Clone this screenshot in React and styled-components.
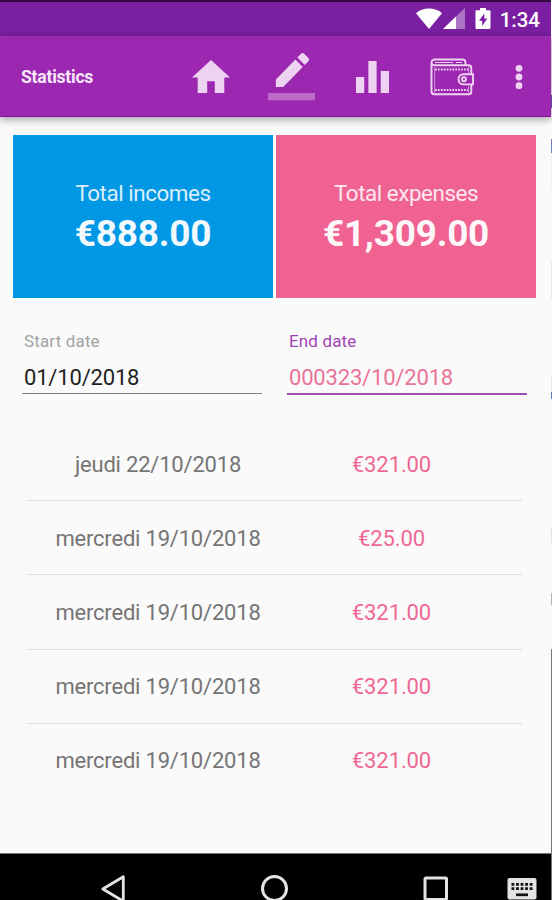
import React from 'react'
import styled, { createGlobalStyle } from 'styled-components'

const GlobalStyle = createGlobalStyle`
  * {
    box-sizing: border-box;
  }

  body {
    margin: 0;
    background: #fafafa;
    font-family: Roboto, 'Noto Sans', sans-serif;
  }
`

const Page = styled.div`
  display: flex;
  width: 552px;
  height: 900px;
  overflow: hidden;
`

const Screen = styled.div`
  display: flex;
  flex-direction: column;
  width: 551px;
  background: #fafafa;
`

// narrow column of whatever sits behind the device
const Backdrop = styled.div`
  width: 1px;
  background: linear-gradient(
    #fafafa 95px,
    #6a63b8 95px 108px,
    #fafafa 108px 139px,
    #7482bd 139px 153px,
    #edf0f5 153px 188px,
    #fafafa 188px 260px,
    #e9ebee 260px 300px,
    #fafafa 300px 374px,
    #e9ebee 374px 392px,
    #6576a8 392px 399px,
    #fafafa 399px 528px,
    #e2e2e4 528px 543px,
    #fafafa 543px 593px,
    #b5b5b9 593px 605px,
    #fafafa 605px 649px,
    #77777a 649px
  );
`

const StatusBar = styled.div`
  display: flex;
  align-items: flex-start;
  justify-content: flex-end;
  height: 36px;
  padding: 6px 11px 0 0;
  border-top: 2px solid #34083f;
  background: #7b1fa2;
  color: #fff;

  svg {
    display: block;
  }
`

const Clock = styled.span`
  margin-left: 9px;
  font-size: 20.5px;
  font-weight: 500;
  line-height: 24px;
`

const Toolbar = styled.header`
  display: flex;
  align-items: center;
  height: 81px;
  padding: 1px 28px 0 21px;
  border-bottom: 1px solid #8a109f;
  background: #9c27b0;
  box-shadow: 0 2px 8px rgba(0, 0, 0, 0.4);
  color: #edd3f1;
  z-index: 1;
`

const Title = styled.h1`
  flex: 1;
  margin: 0;
  padding-top: 1px;
  font-size: 17.6px;
  font-weight: 700;
  letter-spacing: -0.25px;
  line-height: 24px;
  color: #f7e7f9;
`

const Actions = styled.nav`
  display: flex;
  align-items: center;

  svg {
    display: block;
  }
`

const Totals = styled.section`
  display: grid;
  grid-template-columns: 260px 260px;
  gap: 3px;
  padding: 18px 0 0 13px;
`

const Card = styled.div`
  display: flex;
  flex-direction: column;
  align-items: center;
  height: 163px;
  padding-top: 44px;
  background: ${props => props.color};
  color: #fff;
`

const CardLabel = styled.span`
  font-size: 22.4px;
  line-height: 28px;
  letter-spacing: -0.45px;
  opacity: 0.85;
`

const CardAmount = styled.strong`
  margin-top: 3px;
  font-size: 37px;
  line-height: 48px;
  letter-spacing: -0.25px;
  opacity: 0.95;
`

const Dates = styled.section`
  display: grid;
  grid-template-columns: 240px 240px;
  gap: 25px;
  padding: 33px 0 0 22px;
`

const Field = styled.label`
  display: flex;
  flex-direction: column;
  height: ${props => (props.focused ? '64px' : '63px')};
  padding-left: 2px;
  border-bottom: ${props => (props.focused ? '2px solid #a04fb3' : '1px solid #7e7e7e')};
`

const FieldLabel = styled.span`
  font-size: 17px;
  line-height: 20px;
  letter-spacing: 0.15px;
  color: ${props => (props.focused ? '#a244b5' : '#a3a3a3')};
`

const FieldValue = styled.span`
  margin-top: 12px;
  font-size: 22px;
  line-height: 30px;
  letter-spacing: -0.18px;
  color: ${props => (props.focused ? '#eb7398' : '#1f1f1f')};
`

const List = styled.ul`
  flex: 1;
  margin: 0;
  padding: 32px 29px 0 27px;
  list-style: none;
`

const Row = styled.li`
  display: grid;
  grid-template-columns: 262px 205px;
  align-items: center;
  height: 74.2px;
  padding-top: 1px;
  border-bottom: 1.5px solid #dcdcdc;
  text-align: center;
  font-size: 22px;

  &:last-child {
    border-color: transparent;
  }
`

const Day = styled.span`
  letter-spacing: -0.2px;
  color: #757575;
`

const Amount = styled.span`
  letter-spacing: -0.1px;
  color: #ef6895;
`

const NavBar = styled.footer`
  display: flex;
  align-items: flex-start;
  height: 47px;
  padding: 21px 0 0 100px;
  border-top: 1px solid #777;
  background: #000;

  svg {
    display: block;
    flex: none;
  }
`

const Glyph = styled.svg`
  margin-left: ${props => props.$left || 0}px;
  margin-top: ${props => props.$top || 0}px;
  fill: currentColor;
`

const NavGlyph = styled(Glyph)`
  fill: none;
  stroke: #e4e4e4;
  stroke-width: 3;
`

const rows = [
  { id: 1, day: 'jeudi 22/10/2018', amount: '€321.00' },
  { id: 2, day: 'mercredi 19/10/2018', amount: '€25.00' },
  { id: 3, day: 'mercredi 19/10/2018', amount: '€321.00' },
  { id: 4, day: 'mercredi 19/10/2018', amount: '€321.00' },
  { id: 5, day: 'mercredi 19/10/2018', amount: '€321.00' }
]

const StatusIcons = () => (
  <React.Fragment>
    <Glyph width="26" height="21" viewBox="0 0 26 21">
      <path d="M13 21 0 5.2C3.5 2 8 .5 13 .5S22.5 2 26 5.2z" />
    </Glyph>
    <Glyph $left="1" width="22" height="21" viewBox="0 0 22 21">
      <path d="M0 21 22 0v21z" opacity=".38" />
      <path d="M0 21 13 8.6V21z" />
    </Glyph>
    <Glyph $left="10" width="16" height="21" viewBox="0 0 16 21">
      <path
        fillRule="evenodd"
        d="M5 0h6v2.3h3.2c.8 0 1.3.5 1.3 1.3v16.1c0 .8-.5 1.3-1.3 1.3H1.8C1 21 .5 20.5.5 19.7V3.6c0-.8.5-1.3 1.3-1.3H5zM9.3 5.5 4 12.7h3.2v5.3l5-7.4H9.3z"
      />
    </Glyph>
  </React.Fragment>
)

const WalletIcon = () => (
  <Glyph $left="41" width="44" height="38" viewBox="0 0 44 38">
    <g fill="none" stroke="currentColor" strokeWidth="1.9">
      <path d="M1.5 5v28.5c0 1.7 1 2.7 2.7 2.7h34.6c1.6 0 2.5-1 2.5-2.5v-7.2M41.3 16V10c0-1.8-1-2.8-2.8-2.8H4.8C2.7 7.2 1.5 6 1.5 4.5S2.7 1.5 4.8 1.5h27.4c2 0 3.3 1.2 3.3 3.2v2.5" />
      <path d="M43 16.2H33.5c-3 0-5 2.2-5 5s2 5.2 5 5.2H43z" />
      <circle cx="34" cy="21.3" r="2" />
      <path d="M5 4.5h18M26 4.5h6" strokeWidth="1.2" />
      <path d="M5 11.5h33M5 32h33" strokeWidth="2" strokeDasharray="1.7 1.2" />
      <path d="M4.7 9v26M38.5 9v6M38.5 28v7" strokeWidth="1" opacity=".6" />
    </g>
  </Glyph>
)

const ToolbarIcons = () => (
  <Actions>
    <Glyph width="38" height="33" viewBox="2 3 20 17" preserveAspectRatio="none">
      <path d="M10 20v-6h4v6h5v-8h3L12 3 2 12h3v8z" />
    </Glyph>
    <Glyph $left="38" width="47" height="48" viewBox="0 0 24 24" preserveAspectRatio="none">
      <path d="M17.75 7 14 3.25l-10 10V17h3.75zM20.71 4.04c.39-.39.39-1.02 0-1.41L18.37.29c-.39-.39-1.02-.39-1.41 0L15 2.25 18.75 6z" />
      <path d="M0 20h24v3.6H0z" opacity=".4" />
    </Glyph>
    <Glyph $left="41" width="33" height="32" viewBox="4 4 16 16" preserveAspectRatio="none">
      <path d="M10 20h4V4h-4zM4 20h4v-8H4zM16 9v11h4V9z" />
    </Glyph>
    <WalletIcon />
    <Glyph $left="41" width="8" height="26" viewBox="0 0 8 26">
      <circle cx="4" cy="4.3" r="3.4" />
      <circle cx="4" cy="13" r="3.4" />
      <circle cx="4" cy="21.7" r="3.4" />
    </Glyph>
  </Actions>
)

const NavIcons = () => (
  <React.Fragment>
    <NavGlyph width="25" height="27" viewBox="0 0 25 27">
      <path d="M23.3 1.8v24.4L2.8 14z" strokeWidth="2.8" strokeLinejoin="round" />
    </NavGlyph>
    <NavGlyph $left="136" width="27" height="27" viewBox="0 0 27 27">
      <circle cx="13.5" cy="13.5" r="12" />
    </NavGlyph>
    <NavGlyph $left="135" $top="1" width="26" height="26" viewBox="0 0 26 26">
      <rect x="2" y="2" width="21.5" height="21.5" rx="1" />
    </NavGlyph>
    <Glyph $left="58" $top="3" width="30" height="22" viewBox="0 0 30 22">
      <rect x=".5" width="29" height="21.5" rx="2" fill="#e4e4e4" />
      <path
        d="M4.5 6.3h21M4.5 10.7h21"
        stroke="#111"
        strokeWidth="2.8"
        strokeDasharray="2.8 1.75"
      />
      <path d="M9 16.8h12" stroke="#111" strokeWidth="2.7" />
    </Glyph>
  </React.Fragment>
)

const App = () => (
  <Page>
    <GlobalStyle />
    <Screen>
      <StatusBar>
        <StatusIcons />
        <Clock>1:34</Clock>
      </StatusBar>
      <Toolbar>
        <Title>Statistics</Title>
        <ToolbarIcons />
      </Toolbar>
      <Totals>
        <Card color="#0098e5">
          <CardLabel>Total incomes</CardLabel>
          <CardAmount>€888.00</CardAmount>
        </Card>
        <Card color="#f06292">
          <CardLabel>Total expenses</CardLabel>
          <CardAmount>€1,309.00</CardAmount>
        </Card>
      </Totals>
      <Dates>
        <Field>
          <FieldLabel>Start date</FieldLabel>
          <FieldValue>01/10/2018</FieldValue>
        </Field>
        <Field focused>
          <FieldLabel focused>End date</FieldLabel>
          <FieldValue focused>000323/10/2018</FieldValue>
        </Field>
      </Dates>
      <List>
        {rows.map(row => (
          <Row key={row.id}>
            <Day>{row.day}</Day>
            <Amount>{row.amount}</Amount>
          </Row>
        ))}
      </List>
      <NavBar>
        <NavIcons />
      </NavBar>
    </Screen>
    <Backdrop />
  </Page>
)

export default App
